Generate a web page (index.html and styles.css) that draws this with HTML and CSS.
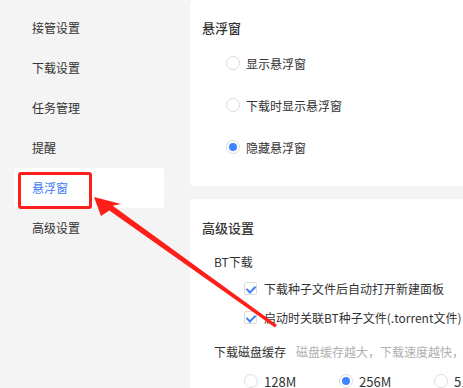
FILE: index.html
```html
<!DOCTYPE html>
<html lang="zh-CN">
<head>
    <meta charset="UTF-8">
    <title>设置 - 悬浮窗</title>
    <link rel="stylesheet" href="styles.css">
</head>
<body>
    <div class="sidebar">
        <div class="nav-item">接管设置</div>
        <div class="nav-item">下载设置</div>
        <div class="nav-item">任务管理</div>
        <div class="nav-item">提醒</div>
        <div class="nav-item active">
            悬浮窗
            <span class="mark-box"></span>
        </div>
        <div class="nav-item">高级设置</div>
    </div>

    <div class="main">
        <div class="card">
            <div class="card-title">悬浮窗</div>
            <div class="radio-list">
                <div class="radio-row"><span class="radio"></span>显示悬浮窗</div>
                <div class="radio-row"><span class="radio"></span>下载时显示悬浮窗</div>
                <div class="radio-row"><span class="radio checked"></span>隐藏悬浮窗</div>
            </div>
        </div>

        <div class="card card-adv">
            <div class="card-title">高级设置</div>
            <div class="sub-title">BT下载</div>
            <div class="check-row"><span class="check"></span>下载种子文件后自动打开新建面板</div>
            <div class="check-row"><span class="check"></span>启动时关联BT种子文件(.torrent文件)</div>
            <div class="cache-row">
                <span>下载磁盘缓存</span>
                <span class="hint">磁盘缓存越大，下载速度越快，</span>
            </div>
            <div class="size-row">
                <div class="size-opt"><span class="radio"></span>128M</div>
                <div class="size-opt"><span class="radio checked"></span>256M</div>
                <div class="size-opt"><span class="radio"></span>512M</div>
            </div>
        </div>
    </div>

    <!-- 标注箭头 -->
    <svg class="arrow" xmlns="http://www.w3.org/2000/svg" viewBox="0 0 463 388">
        <polygon points="94,197 121,204 112.7,205.8 277,325 275,327.5 109.3,210.4 101,216" fill="#ff1f1a"/>
    </svg>
</body>
</html>
```

FILE: styles.css
```css
* {
    margin: 0;
    padding: 0;
    box-sizing: border-box;
}

body {
    width: 463px;
    height: 388px;
    overflow: hidden;
    background: #f4f4f4;
    display: flex;
    color: #333;
    font-family: 'Noto Sans CJK SC', 'Noto Sans', sans-serif;
    font-size: 12px;
    position: relative;
}

.sidebar {
    width: 190px;
    flex-shrink: 0;
    padding: 8px 0 0 14px;
}

.nav-item {
    width: 150px;
    height: 40px;
    line-height: 40px;
    padding-left: 18px;
    border-radius: 4px;
    position: relative;
}

.nav-item.active {
    background: #fff;
    color: #3d7cf5;
}

.mark-box {
    position: absolute;
    left: 4px;
    top: 4px;
    width: 74px;
    height: 37px;
    border: 3px solid #ff1f1a;
    border-radius: 3px;
}

.main {
    flex: 1;
    min-width: 0;
    overflow: hidden;
}

.card {
    width: 300px;
    background: #fff;
    border-radius: 4px 0 0 4px;
    padding: 0 12px 18px;
}

.card-title {
    padding-top: 14px;
    line-height: 28px;
    font-size: 13px;
    font-weight: 500;
}

.radio-list {
    padding-left: 24px;
}

.radio-row {
    height: 42px;
    display: flex;
    align-items: center;
}

.radio {
    width: 14px;
    height: 14px;
    border: 1px solid #dcdcdc;
    border-radius: 50%;
    background: #fff;
    margin-right: 6px;
    display: flex;
    align-items: center;
    justify-content: center;
    flex-shrink: 0;
}

.radio.checked::after {
    content: '';
    width: 8px;
    height: 8px;
    border-radius: 50%;
    background: #3f85ff;
}

.card-adv {
    margin-top: 13px;
    height: 200px;
    padding-top: 1px;
}

.sub-title {
    padding-left: 12px;
    margin-top: 8px;
    line-height: 24px;
}

.check-row {
    height: 29px;
    display: flex;
    align-items: center;
    padding-left: 42px;
    white-space: nowrap;
}

.check {
    width: 13px;
    height: 13px;
    border: 1px solid #dcdcdc;
    border-radius: 2px;
    margin-right: 7px;
    position: relative;
    flex-shrink: 0;
}

.check::after {
    content: '';
    position: absolute;
    left: 3px;
    top: 1px;
    width: 4px;
    height: 7px;
    border: solid #3d7cf5;
    border-width: 0 2px 2px 0;
    transform: rotate(45deg);
}

.cache-row {
    height: 38px;
    display: flex;
    align-items: center;
    padding-left: 12px;
    white-space: nowrap;
}

.hint {
    color: #b0b0b0;
    margin-left: 10px;
}

.size-row {
    display: flex;
    padding-left: 42px;
    height: 22px;
    align-items: center;
}

.size-opt {
    width: 95px;
    display: flex;
    align-items: center;
    flex-shrink: 0;
    font-size: 13px;
}

.arrow {
    position: absolute;
    left: 0;
    top: 0;
    width: 463px;
    height: 388px;
    pointer-events: none;
}
```
